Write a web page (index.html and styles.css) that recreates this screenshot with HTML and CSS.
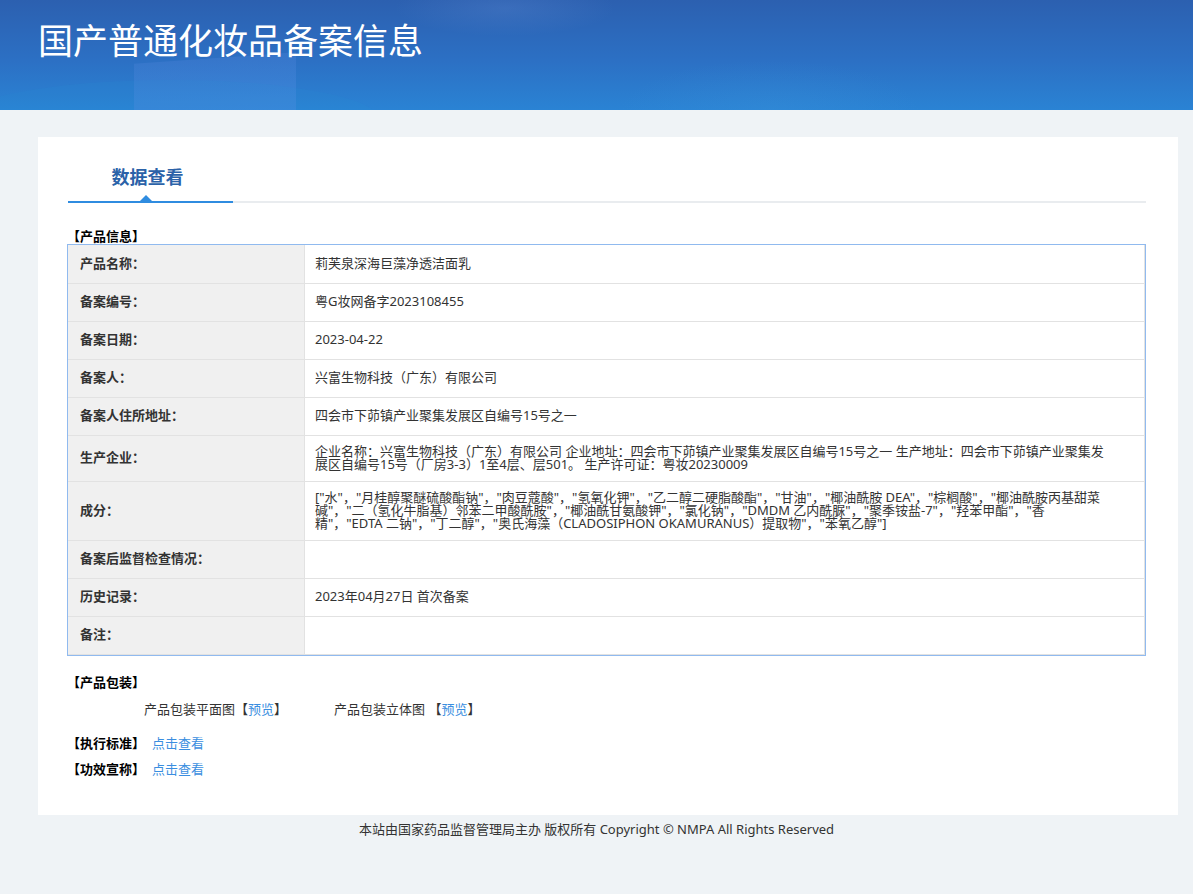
FILE: index.html
```html
<!DOCTYPE html>
<html lang="zh-CN">
<head>
<meta charset="utf-8">
<title>国产普通化妆品备案信息</title>
<link rel="stylesheet" href="styles.css">
</head>
<body>
<header class="banner">
  <div class="banner-deco deco-a"></div>
  <div class="banner-deco deco-b"></div>
  <h1 class="banner-title">国产普通化妆品备案信息</h1>
</header>
<main class="card">
  <div class="tabs">
    <div class="tab">数据查看</div>
  </div>
  <div class="sec-title">【产品信息】</div>
  <table class="info">
    <tr><td class="lbl">产品名称：</td><td class="val">莉芙泉深海巨藻净透洁面乳</td></tr>
    <tr><td class="lbl">备案编号：</td><td class="val">粤G妆网备字2023108455</td></tr>
    <tr><td class="lbl">备案日期：</td><td class="val">2023-04-22</td></tr>
    <tr><td class="lbl">备案人：</td><td class="val">兴富生物科技（广东）有限公司</td></tr>
    <tr><td class="lbl">备案人住所地址：</td><td class="val">四会市下茆镇产业聚集发展区自编号15号之一</td></tr>
    <tr><td class="lbl">生产企业：</td><td class="val"><div class="wrap">企业名称：兴富生物科技（广东）有限公司 企业地址：四会市下茆镇产业聚集发展区自编号15号之一 生产地址：四会市下茆镇产业聚集发展区自编号15号（厂房3-3）1至4层、层501。 生产许可证：粤妆20230009</div></td></tr>
    <tr><td class="lbl">成分：</td><td class="val"><div class="wrap">["水"，"月桂醇聚醚硫酸酯钠"，"肉豆蔻酸"，"氢氧化钾"，"乙二醇二硬脂酸酯"，"甘油"，"椰油酰胺 DEA"，"棕榈酸"，"椰油酰胺丙基甜菜碱"，"二（氢化牛脂基）邻苯二甲酸酰胺"，"椰油酰甘氨酸钾"，"氯化钠"，"DMDM 乙内酰脲"，"聚季铵盐-7"，"羟苯甲酯"，"香精"，"EDTA 二钠"，"丁二醇"，"奥氏海藻（CLADOSIPHON OKAMURANUS）提取物"，"苯氧乙醇"]</div></td></tr>
    <tr><td class="lbl">备案后监督检查情况：</td><td class="val"></td></tr>
    <tr><td class="lbl">历史记录：</td><td class="val">2023年04月27日 首次备案</td></tr>
    <tr><td class="lbl">备注：</td><td class="val"></td></tr>
  </table>
  <div class="sec-title pack-title">【产品包装】</div>
  <div class="pack-row">
    <span class="pack-item">产品包装平面图【<a class="link" href="#">预览</a>】</span>
    <span class="pack-item">产品包装立体图 【<a class="link" href="#">预览</a>】</span>
  </div>
  <div class="sec-line first"><span class="sec-label">【执行标准】</span><a class="link more" href="#">点击查看</a></div>
  <div class="sec-line"><span class="sec-label">【功效宣称】</span><a class="link more" href="#">点击查看</a></div>
</main>
<footer class="footer">本站由国家药品监督管理局主办 版权所有 Copyright © NMPA All Rights Reserved</footer>
</body>
</html>
```
FILE: styles.css
```css
html, body {
  margin: 0;
  padding: 0;
}
body {
  background: #eff3f6;
  font-family: "Noto Sans", "Noto Sans CJK TC", sans-serif;
  font-size: 13px;
  color: #333;
  min-height: 894px;
}
.banner {
  position: relative;
  height: 110px;
  overflow: hidden;
  background:
    radial-gradient(ellipse 110px 28px at 505px 8px, rgba(110,150,220,0.22), rgba(110,150,220,0) 100%),
    radial-gradient(ellipse 150px 50px at 770px 110px, rgba(60,150,220,0.25), rgba(60,150,220,0) 100%),
    linear-gradient(180deg, #2c60b0 0%, #2c70c4 55%, #2a83d4 100%);
}
.banner-deco {
  position: absolute;
}
.deco-a {
  left: 134px;
  top: 58px;
  width: 162px;
  height: 60px;
  background: linear-gradient(180deg, rgba(75,130,215,0.35), rgba(75,140,225,0.45));
  transform: skewY(-4deg);
}
.deco-b {
  left: -40px;
  top: 80px;
  width: 420px;
  height: 80px;
  border-radius: 50%;
  background: rgba(40,150,215,0.12);
}
.banner-title {
  position: relative;
  margin: 0;
  padding: 19px 0 0 38px;
  font-family: "Noto Sans CJK SC", sans-serif;
  font-size: 35px;
  line-height: 40px;
  font-weight: 400;
  color: #fff;
}
.card {
  display: block;
  margin: 27px 15px 0 38px;
  background: #fff;
  padding: 0 32px 38px 29px;
}
.tabs {
  height: 64px;
  border-bottom: 2px solid #e9ecef;
  margin-left: 1px;
  display: flex;
}
.tab {
  position: relative;
  width: 165px;
  box-sizing: border-box;
  padding-top: 27px;
  padding-left: 2px;
  height: 66px;
  border-bottom: 2px solid #2f8ce0;
  text-align: center;
  font-family: "Noto Sans CJK SC", sans-serif;
  font-size: 18px;
  line-height: 24px;
  font-weight: 700;
  color: #2b62a8;
  padding-right: 8px;
}
.tab::after {
  content: "";
  position: absolute;
  left: 72px;
  bottom: 0;
  width: 0;
  height: 0;
  border-left: 6px solid transparent;
  border-right: 6px solid transparent;
  border-bottom: 6px solid #2f8ce0;
}
.sec-title {
  margin-top: 25px;
  font-weight: 700;
  color: #000;
  line-height: 16px;
}
.info {
  width: 100%;
  border-collapse: separate;
  border-spacing: 0;
  border: 1px solid #90baef;
}
.info tr {
  height: 38px;
}
.info tr:first-child {
  height: 39px;
}
.info td {
  border-right: 1px solid #e2e2e2;
  border-bottom: 1px solid #e2e2e2;
  line-height: 13px;
  padding: 8.5px 10px 10.5px 12px;
  vertical-align: middle;
}
.info td.lbl {
  width: 214px;
  background: #f0f0f0;
  font-weight: 700;
  color: #333;
}
.info td.val {
  padding-left: 10px;
  color: #333;
}
.wrap {
  max-width: 790px;
}
.pack-title {
  margin-top: 18px;
}
.pack-row {
  margin-top: 11px;
  padding-left: 77px;
  line-height: 16px;
  display: flex;
  gap: 47px;
  color: #333;
}
.link {
  color: #3a8ee0;
  text-decoration: none;
}
.sec-line {
  margin-top: 10px;
  line-height: 16px;
  display: flex;
}
.sec-line.first {
  margin-top: 18px;
}
.sec-label {
  font-weight: 700;
  color: #000;
}
.more {
  margin-left: 7px;
}
.footer {
  text-align: center;
  padding-top: 6px;
  line-height: 16px;
  color: #333;
}
```
